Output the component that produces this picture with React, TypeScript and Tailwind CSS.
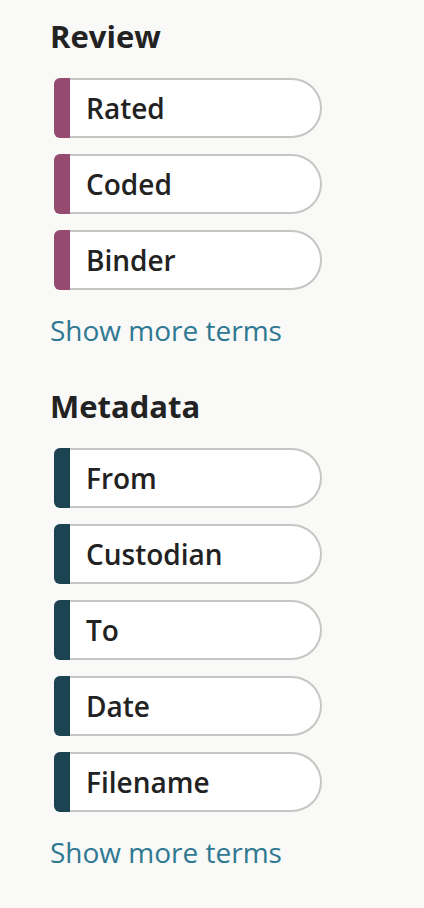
import React from 'react';

type Section = {
    title: string;
    accent: string;
    terms: string[];
};

const sections: Section[] = [
    { title: 'Review', accent: 'bg-[#954a6f]', terms: ['Rated', 'Coded', 'Binder'] },
    { title: 'Metadata', accent: 'bg-[#1b4351]', terms: ['From', 'Custodian', 'To', 'Date', 'Filename'] },
];

const TermPill: React.FC<{ label: string; accent: string }> = ({ label, accent }) => (
    <button className="flex h-[60px] w-[268px] items-stretch text-left">
        <span className={`w-4 shrink-0 rounded-l-[6px] ${accent}`} />
        <span className="flex flex-1 items-center rounded-r-full border-2 border-l-0 border-[#c6c6c4] bg-white pl-4 text-[28px] font-semibold text-[#222222]">
            {label}
        </span>
    </button>
);

export default function App() {
    return (
        <div className="min-h-[908px] bg-[#f9f9f8] pl-[50px] pt-[17px] font-['Open_Sans',sans-serif]">
            {sections.map((section, i) => (
                <div key={section.title} className={i > 0 ? 'mt-[38px]' : ''}>
                    <h2 className="text-[31px] font-bold leading-[38px] text-[#222222]">{section.title}</h2>
                    <div className="mt-[23px] flex flex-col gap-4 pl-1">
                        {section.terms.map((t) => (
                            <TermPill key={t} label={t} accent={section.accent} />
                        ))}
                    </div>
                    <a href="#" className="mt-[21px] block text-[28px] leading-[38px] text-[#2e7891]">
                        Show more terms
                    </a>
                </div>
            ))}
        </div>
    );
}
